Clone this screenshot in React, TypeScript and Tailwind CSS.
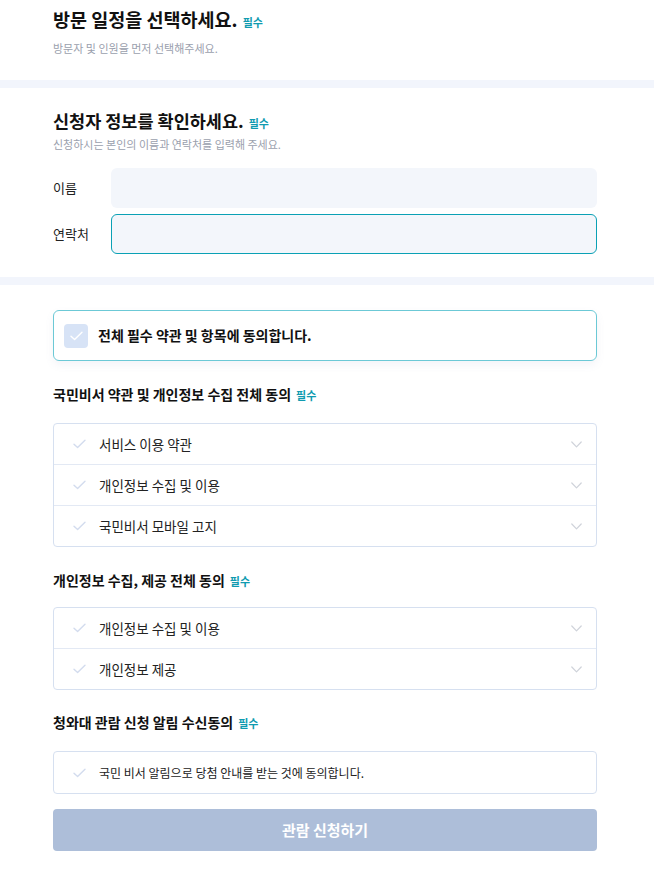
import React from "react";

const font = { fontFamily: '"Noto Sans CJK KR", "Noto Sans", sans-serif' };

function Check({ className = "" }: { className?: string }) {
  return (
    <svg width="13" height="10" viewBox="0 0 13 10" className={className} fill="none">
      <path d="M1 5.2 L4.6 8.6 L12 1.2" stroke="currentColor" strokeWidth="1.4" strokeLinecap="round" strokeLinejoin="round" />
    </svg>
  );
}

function Chevron() {
  return (
    <svg width="11" height="7" viewBox="0 0 11 7" fill="none" className="text-[#cfd3da]">
      <path d="M0.8 1 L5.5 5.8 L10.2 1" stroke="currentColor" strokeWidth="1.2" strokeLinecap="round" strokeLinejoin="round" />
    </svg>
  );
}

function Req() {
  return <span className="ml-[5px] text-[11px] font-bold text-[#0f9bb0]">필수</span>;
}

function Row({ label, last, chevron = true, small = false }: { label: string; last?: boolean; chevron?: boolean; small?: boolean }) {
  return (
    <div className={`flex items-center pl-[19px] pr-[14px] ${last ? (small ? "h-[41px]" : "h-[40px]") : "h-[41px] border-b border-[#e3e9f4]"}`}>
      <Check className="text-[#d3dcee]" />
      <span className={`ml-[13px] flex-1 text-[#222] ${small ? "text-[12px]" : "text-[13.5px]"}`}>{label}</span>
      {chevron && <Chevron />}
    </div>
  );
}

export default function App() {
  return (
    <div style={font} className="w-[654px] bg-white text-[#111]">
      <section className="pl-[53px] pr-[57px] pt-[5px] pb-[25px]">
        <h2 className="flex items-baseline text-[18.5px] font-bold leading-[28px]">
          방문 일정을 선택하세요.<Req />
        </h2>
        <p className="mt-[5px] text-[11px] leading-[14px] text-[#9aa0ad]">방문자 및 인원을 먼저 선택해주세요.</p>
      </section>
      <div className="h-[8px] bg-[#f2f5fc]" />
      <section className="pl-[53px] pr-[57px] pt-[19px] pb-[23px]">
        <h2 className="flex items-baseline text-[17.5px] font-bold leading-[28px]">
          신청자 정보를 확인하세요.<Req />
        </h2>
        <p className="mt-0 text-[11px] leading-[14px] text-[#9aa0ad]">신청하시는 본인의 이름과 연락처를 입력해 주세요.</p>
        <div className="mt-[17px] flex items-center">
          <label className="w-[58px] text-[13px] text-[#222]">이름</label>
          <div className="h-[40px] flex-1 rounded-[6px] bg-[#f3f6fb]" />
        </div>
        <div className="mt-[6px] flex items-center">
          <label className="w-[58px] text-[13px] text-[#222]">연락처</label>
          <div className="h-[40px] flex-1 rounded-[6px] border border-[#0aa1b5] bg-[#f3f6fb]" />
        </div>
      </section>
      <div className="h-[8px] bg-[#f2f5fc]" />
      <section className="pl-[53px] pr-[57px] pt-[25px] pb-[20px]">
        <div className="flex h-[51px] items-center rounded-[6px] border border-[#6cc9d6] pl-[10px] shadow-[0_4px_8px_rgba(100,120,160,0.08)]">
          <div className="flex h-[24px] w-[24px] items-center justify-center rounded-[4px] bg-[#d7e3f6]">
            <Check className="text-white" />
          </div>
          <span className="ml-[10px] text-[14px] font-bold text-[#111]">전체 필수 약관 및 항목에 동의합니다.</span>
        </div>

        <h3 className="mt-[23px] flex items-baseline text-[14px] font-semibold leading-[20px]">
          국민비서 약관 및 개인정보 수집 전체 동의<Req />
        </h3>
        <div className="mt-[18px] rounded-[4px] border border-[#d6e0f0]">
          <Row label="서비스 이용 약관" />
          <Row label="개인정보 수집 및 이용" />
          <Row label="국민비서 모바일 고지" last />
        </div>

        <h3 className="mt-[23px] flex items-baseline text-[14px] font-semibold leading-[20px]">
          개인정보 수집, 제공 전체 동의<Req />
        </h3>
        <div className="mt-[16px] rounded-[4px] border border-[#d6e0f0]">
          <Row label="개인정보 수집 및 이용" />
          <Row label="개인정보 제공" last />
        </div>

        <h3 className="mt-[22px] flex items-baseline text-[14px] font-semibold leading-[20px]">
          청와대 관람 신청 알림 수신동의<Req />
        </h3>
        <div className="mt-[18px] rounded-[4px] border border-[#d6e0f0]">
          <Row label="국민 비서 알림으로 당첨 안내를 받는 것에 동의합니다." last chevron={false} small />
        </div>

        <button className="mt-[15px] flex h-[42px] w-full items-center justify-center rounded-[4px] bg-[#adbed9] text-[15px] font-bold text-white">
          관람 신청하기
        </button>
      </section>
    </div>
  );
}
